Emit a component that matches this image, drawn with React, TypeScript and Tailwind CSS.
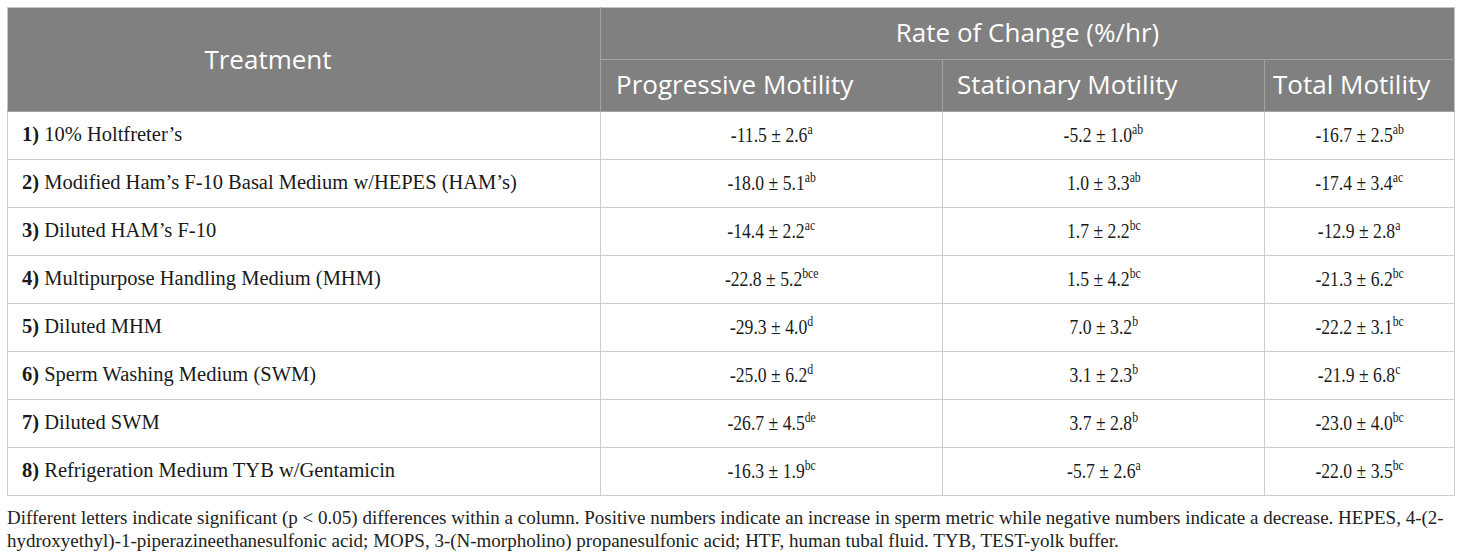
import React from "react";

type Val = [string, string];
const rows: { n: string; name: string; p: Val; s: Val; t: Val }[] = [
  { n: "1)", name: "10% Holtfreter’s", p: ["-11.5 ± 2.6", "a"], s: ["-5.2 ± 1.0", "ab"], t: ["-16.7 ± 2.5", "ab"] },
  { n: "2)", name: "Modified Ham’s F-10 Basal Medium w/HEPES (HAM’s)", p: ["-18.0 ± 5.1", "ab"], s: ["1.0 ± 3.3", "ab"], t: ["-17.4 ± 3.4", "ac"] },
  { n: "3)", name: "Diluted HAM’s F-10", p: ["-14.4 ± 2.2", "ac"], s: ["1.7 ± 2.2", "bc"], t: ["-12.9 ± 2.8", "a"] },
  { n: "4)", name: "Multipurpose Handling Medium (MHM)", p: ["-22.8 ± 5.2", "bce"], s: ["1.5 ± 4.2", "bc"], t: ["-21.3 ± 6.2", "bc"] },
  { n: "5)", name: "Diluted MHM", p: ["-29.3 ± 4.0", "d"], s: ["7.0 ± 3.2", "b"], t: ["-22.2 ± 3.1", "bc"] },
  { n: "6)", name: "Sperm Washing Medium (SWM)", p: ["-25.0 ± 6.2", "d"], s: ["3.1 ± 2.3", "b"], t: ["-21.9 ± 6.8", "c"] },
  { n: "7)", name: "Diluted SWM", p: ["-26.7 ± 4.5", "de"], s: ["3.7 ± 2.8", "b"], t: ["-23.0 ± 4.0", "bc"] },
  { n: "8)", name: "Refrigeration Medium TYB w/Gentamicin", p: ["-16.3 ± 1.9", "bc"], s: ["-5.7 ± 2.6", "a"], t: ["-22.0 ± 3.5", "bc"] },
];

function Num({ v }: { v: Val }) {
  return (
    <span className="inline-block scale-x-[0.84] whitespace-nowrap text-[21px]">
      {v[0]}
      <sup className="text-[14px] relative -top-[8px]">{v[1]}</sup>
    </span>
  );
}

export default function App() {
  return (
    <div className="w-[1460px] h-[560px] bg-white pl-[7px] pt-[7px] font-['Liberation_Serif',serif] text-[#1a1a1a] overflow-hidden">
      <table className="w-[1447px] border-collapse table-fixed border border-[#c4c4c4]">
        <colgroup>
          <col className="w-[593px]" />
          <col className="w-[342px]" />
          <col className="w-[322px]" />
          <col className="w-[190px]" />
        </colgroup>
        <thead className="bg-[#808080] text-white font-['Open_Sans',sans-serif] text-[26px] font-normal">
          <tr className="h-[52px]">
            <th rowSpan={2} className="font-normal text-center pr-[72px] border border-[#a3a3a3] border-l-[#c4c4c4] border-t-[#c4c4c4]">
              Treatment
            </th>
            <th colSpan={3} className="font-normal text-center pb-[3px] border border-[#a3a3a3] border-t-[#c4c4c4] border-r-[#c4c4c4]">
              Rate of Change (%/hr)
            </th>
          </tr>
          <tr className="h-[52px]">
            <th className="font-normal text-left pl-[15px] pb-[2px] border border-[#a3a3a3]">Progressive Motility</th>
            <th className="font-normal text-left pl-[14px] pb-[2px] border border-[#a3a3a3]">Stationary Motility</th>
            <th className="font-normal text-left pl-[8px] pb-[2px] border border-[#a3a3a3] border-r-[#c4c4c4]">Total Motility</th>
          </tr>
        </thead>
        <tbody className="text-[20.5px]">
          {rows.map((r) => (
            <tr key={r.n} className="h-[48px]">
              <td className="pl-[14px] pb-[3px] border border-[#cdcdcd]">
                <b>{r.n}</b> {r.name}
              </td>
              <td className="text-center border border-[#cdcdcd]"><Num v={r.p} /></td>
              <td className="text-center border border-[#cdcdcd]"><Num v={r.s} /></td>
              <td className="text-center border border-[#cdcdcd]"><Num v={r.t} /></td>
            </tr>
          ))}
        </tbody>
      </table>
      <p className="w-[1448px] mt-[10px] text-[19px] leading-[23px] text-[#222]">
        Different letters indicate significant (p &lt; 0.05) differences within a column. Positive numbers indicate an increase in sperm metric while negative numbers indicate a decrease. HEPES, 4-(2-hydroxyethyl)-1-piperazineethanesulfonic acid; MOPS, 3-(N-morpholino) propanesulfonic acid; HTF, human tubal fluid. TYB, TEST-yolk buffer.
      </p>
    </div>
  );
}
